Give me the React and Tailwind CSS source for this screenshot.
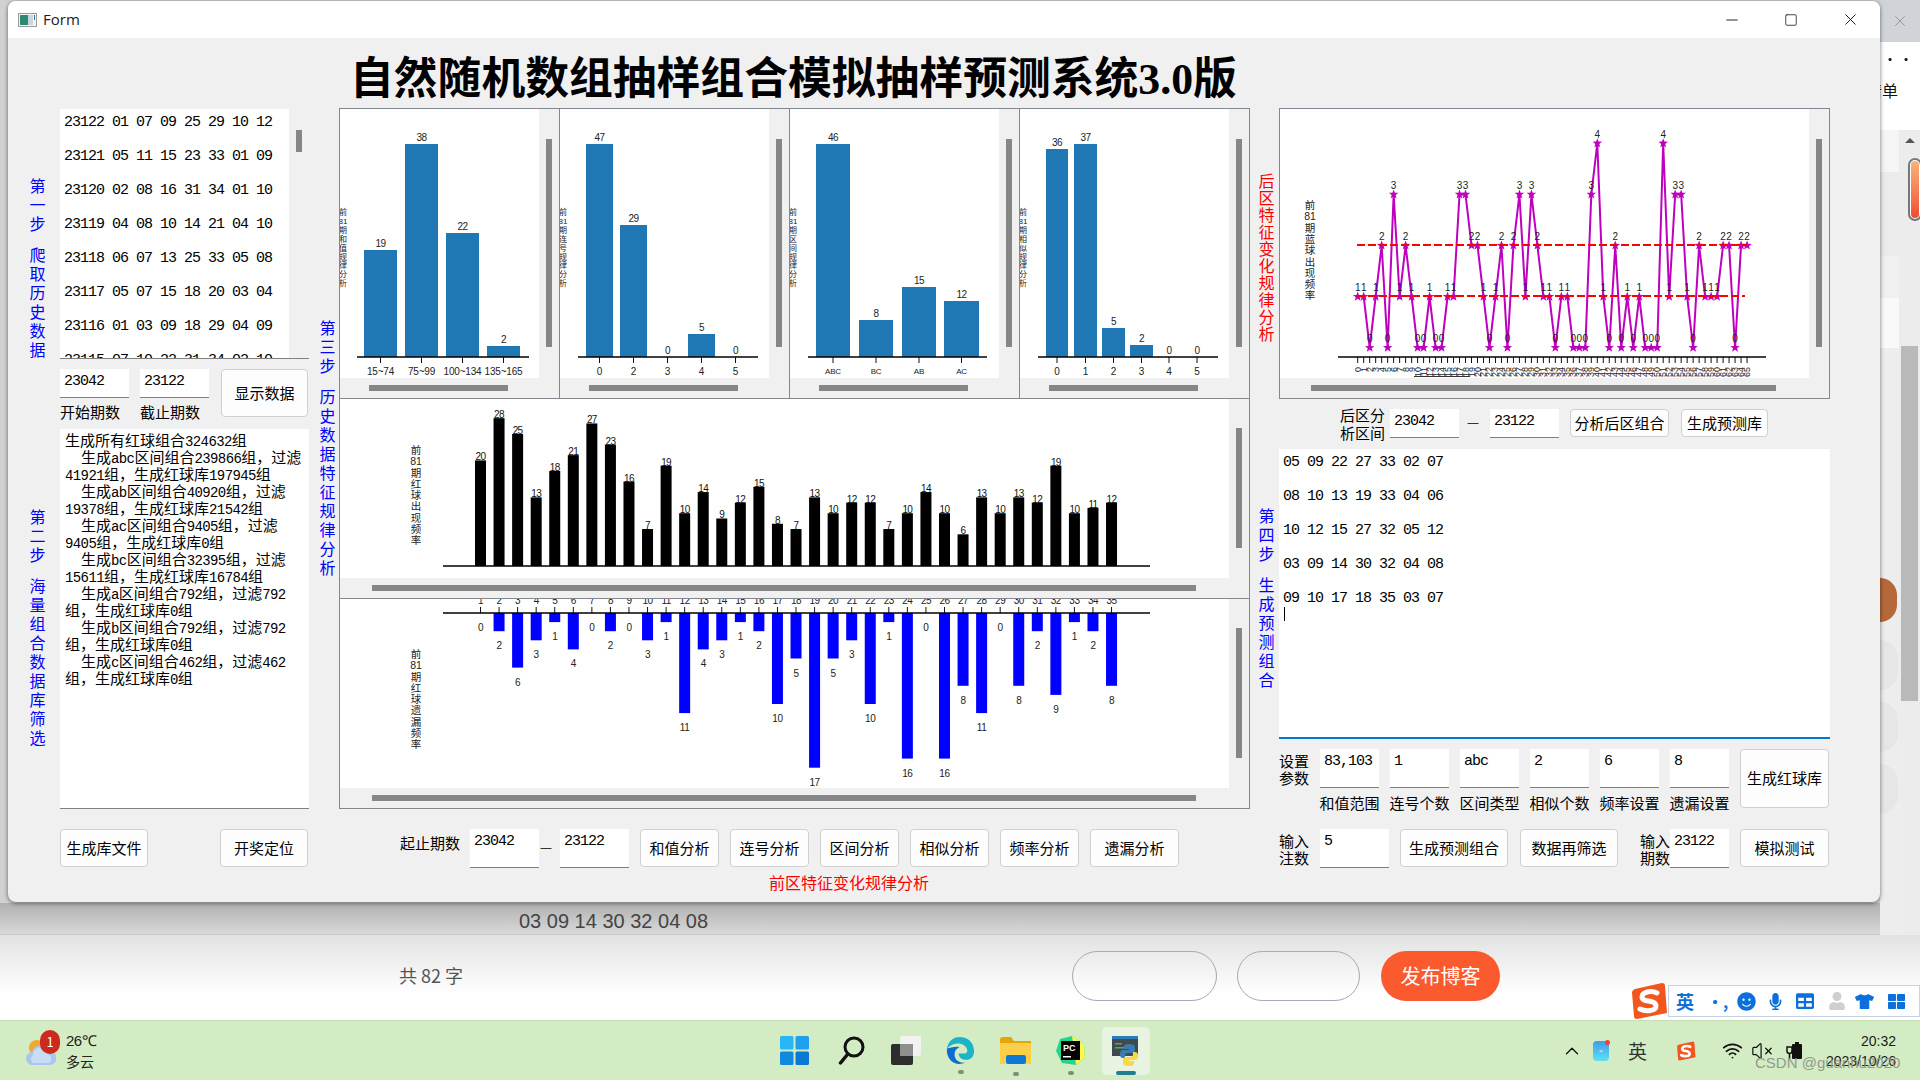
import React from 'react';
import { X, Minus, Square, ChevronUp, Wifi, VolumeX } from 'lucide-react';
import { FaSmile, FaMicrophone, FaTable, FaUser, FaTshirt, FaThLarge } from 'react-icons/fa';

const MONO = "[font-family:'Liberation_Mono','Noto_Sans_CJK_SC',monospace] text-[15px] tracking-[-1px]";
const CHART_FONT = "[font-family:'Liberation_Sans','Noto_Sans_CJK_SC',sans-serif]";

// left list of draws
const HISTORY = [
  '23122 01 07 09 25 29 10 12',
  '23121 05 11 15 23 33 01 09',
  '23120 02 08 16 31 34 01 10',
  '23119 04 08 10 14 21 04 10',
  '23118 06 07 13 25 33 05 08',
  '23117 05 07 15 18 20 03 04',
  '23116 01 03 09 18 29 04 09',
  '23115 07 10 22 31 34 02 10',
];

const LOG = [
  ['生成所有红球组合324632组', false],
  ['生成abc区间组合239866组，过滤', true],
  ['41921组，生成红球库197945组', false],
  ['生成ab区间组合40920组，过滤', true],
  ['19378组，生成红球库21542组', false],
  ['生成ac区间组合9405组，过滤', true],
  ['9405组，生成红球库0组', false],
  ['生成bc区间组合32395组，过滤', true],
  ['15611组，生成红球库16784组', false],
  ['生成a区间组合792组，过滤792', true],
  ['组，生成红球库0组', false],
  ['生成b区间组合792组，过滤792', true],
  ['组，生成红球库0组', false],
  ['生成c区间组合462组，过滤462', true],
  ['组，生成红球库0组', false],
];

const PREDICTIONS = [
  '05 09 22 27 33 02 07',
  '08 10 13 19 33 04 06',
  '10 12 15 27 32 05 12',
  '03 09 14 30 32 04 08',
  '09 10 17 18 35 03 07',
];

const RED_FREQ = [20, 28, 25, 13, 18, 21, 27, 23, 16, 7, 19, 10, 14, 9, 12, 15, 8, 7, 13, 10, 12, 12, 7, 10, 14, 10, 6, 13, 10, 13, 12, 19, 10, 11, 12];
const RED_MISS = [0, 2, 6, 3, 1, 4, 0, 2, 0, 3, 1, 11, 4, 3, 1, 2, 10, 5, 17, 5, 3, 10, 1, 16, 0, 16, 8, 11, 0, 8, 2, 9, 1, 2, 8];
const BLUE_FREQ = [1, 1, 0, 1, 2, 0, 3, 1, 2, 1, 0, 0, 1, 0, 0, 1, 1, 3, 3, 2, 2, 1, 0, 1, 2, 0, 2, 3, 1, 3, 2, 1, 1, 0, 1, 1, 0, 0, 0, 3, 4, 1, 0, 2, 0, 1, 0, 1, 0, 0, 0, 4, 1, 3, 3, 1, 0, 2, 1, 1, 1, 2, 2, 0, 2, 2];

const SMALL_CHARTS = [
  {
    view: '340 109 199 269', width: 199, labelX: 343, axis: [357, 529],
    title: ['前', '81', '期', '和', '值', '规', '律', '分', '析'],
    bars: [
      { x0: 364, x1: 397, top: 250, v: 19, name: '15~74' },
      { x0: 405, x1: 438, top: 144, v: 38, name: '75~99' },
      { x0: 446, x1: 479, top: 233, v: 22, name: '100~134' },
      { x0: 487, x1: 520, top: 346, v: 2, name: '135~165' },
    ],
  },
  {
    view: '560 109 209 269', width: 209, labelX: 563, axis: [578, 758],
    title: ['前', '81', '期', '连', '号', '规', '律', '分', '析'],
    bars: [
      { x0: 586, x1: 613, top: 144, v: 47, name: '0' },
      { x0: 620, x1: 647, top: 225, v: 29, name: '2' },
      { x0: 654, x1: 681, top: 357, v: 0, name: '3' },
      { x0: 688, x1: 715, top: 334, v: 5, name: '4' },
      { x0: 722, x1: 749, top: 357, v: 0, name: '5' },
    ],
  },
  {
    view: '790 109 209 269', width: 209, labelX: 793, axis: [808, 987],
    title: ['前', '81', '期', '区', '间', '规', '律', '分', '析'],
    bars: [
      { x0: 816, x1: 850, top: 144, v: 46, name: 'ABC' },
      { x0: 859, x1: 893, top: 320, v: 8, name: 'BC' },
      { x0: 902, x1: 936, top: 287, v: 15, name: 'AB' },
      { x0: 944, x1: 979, top: 301, v: 12, name: 'AC' },
    ],
  },
  {
    view: '1020 109 209 269', width: 209, labelX: 1023, axis: [1038, 1218],
    title: ['前', '81', '期', '相', '似', '规', '律', '分', '析'],
    bars: [
      { x0: 1046, x1: 1068, top: 149, v: 36, name: '0' },
      { x0: 1074, x1: 1097, top: 144, v: 37, name: '1' },
      { x0: 1102, x1: 1125, top: 328, v: 5, name: '2' },
      { x0: 1130, x1: 1153, top: 345, v: 2, name: '3' },
      { x0: 1158, x1: 1180, top: 357, v: 0, name: '4' },
      { x0: 1186, x1: 1208, top: 357, v: 0, name: '5' },
    ],
  },
];

// the log mixes half width latin with full width hanzi, like the SimSun original
function Mixed({ text }) {
  return text.split(/([\x00-\x7f]+)/).map((part, i) =>
    i % 2 ? (
      <span key={i} className="[font-family:'Liberation_Mono',monospace] text-[14px] leading-[10px] tracking-[-0.6px]">{part}</span>
    ) : (
      part
    )
  );
}

function VLabel({ text, className }) {
  return (
    <div className={`flex flex-col items-center text-[16px] ${className}`}>
      {text.split('').map((c, i) =>
        c === ' ' ? <div key={i} className="h-[12px]" /> : <div key={i}>{c}</div>
      )}
    </div>
  );
}

function Field({ value, className }) {
  return (
    <div className={`bg-white border-b border-[#808080] pl-[4px] pt-[3px] leading-[20px] text-black ${MONO} ${className}`}>
      {value}
    </div>
  );
}

function Btn({ children, className }) {
  return (
    <button className={`flex items-center justify-center bg-[#fdfdfd] border border-[#d0d0d0] rounded-[4px] text-[15px] text-black ${className}`}>
      {children}
    </button>
  );
}

function Caption({ children, className }) {
  return <div className={`text-[15px] text-black whitespace-nowrap ${className}`}>{children}</div>;
}

function Thumb({ className }) {
  return <div className={`bg-[#868686] ${className}`} />;
}

// one scroll area of the Qt form: picture, vertical bar, horizontal bar
function ScrollCell({ width, height, track, vThumb, hThumb, className, children }) {
  return (
    <div className={`flex flex-col shrink-0 ${className}`}>
      <div className="flex">
        <div className={`bg-white overflow-hidden ${width} ${height}`}>{children}</div>
        <div className="w-[20px]">
          <Thumb className={`ml-[7px] w-[6px] ${vThumb}`} />
        </div>
      </div>
      <div className={track}>
        <Thumb className={`mt-[7px] h-[6px] ${hThumb}`} />
      </div>
    </div>
  );
}

function StackedTitle({ x, y, tokens, size, pitch }) {
  return tokens.map((t, i) => (
    <text key={i} x={x} y={y + i * pitch} fontSize={size} textAnchor="middle" fill="#222">{t}</text>
  ));
}

function SmallBars({ chart }) {
  const [x, y, w, h] = chart.view.split(' ');
  return (
    <svg width={w} height={h} viewBox={chart.view} className={`block ${CHART_FONT}`}>
      <StackedTitle x={chart.labelX} y={215} tokens={chart.title} size={8} pitch={8.9} />
      {chart.bars.map((b) => {
        const cx = (b.x0 + b.x1) / 2;
        const short = b.name.length <= 3 && /[A-Z]/.test(b.name);
        return (
          <g key={b.name}>
            {b.v > 0 && <rect x={b.x0} y={b.top} width={b.x1 - b.x0} height={357 - b.top} fill="#1f77b4" />}
            <text x={cx} y={b.top - 3} fontSize="10" letterSpacing="-0.5" textAnchor="middle" fill="#222">{b.v}</text>
            <line x1={cx} x2={cx} y1="357" y2="363" stroke="#111" />
            <text x={cx} y={short ? 374 : 375} fontSize={short ? 8 : 10} letterSpacing="-0.2" textAnchor="middle" fill="#222">{b.name}</text>
          </g>
        );
      })}
      <line x1={chart.axis[0]} x2={chart.axis[1]} y1="357" y2="357" stroke="#000" strokeWidth="1.5" />
    </svg>
  );
}

function barX(i) {
  return 475 + i * 18.56;
}

function FreqChart() {
  return (
    <svg width="889" height="179" viewBox="340 399 889 179" className={`block ${CHART_FONT}`}>
      <StackedTitle x={416} y={454} tokens={['前', '81', '期', '红', '球', '出', '现', '频', '率']} size={10.5} pitch={11.25} />
      {RED_FREQ.map((v, i) => {
        const top = 566 - v * 5.28;
        return (
          <g key={i}>
            <rect x={barX(i)} y={top} width="11" height={566 - top} fill="#000" />
            <text x={barX(i) + 5.5} y={top} fontSize="10" letterSpacing="-0.6" textAnchor="middle" fill="#111">{v}</text>
          </g>
        );
      })}
      <line x1="443" x2="1150" y1="566" y2="566" stroke="#000" strokeWidth="1.5" />
    </svg>
  );
}

function MissChart() {
  return (
    <svg width="889" height="189" viewBox="340 599 889 189" className={`block ${CHART_FONT}`}>
      <StackedTitle x={416} y={658} tokens={['前', '81', '期', '红', '球', '遗', '漏', '频', '率']} size={10.5} pitch={11.25} />
      {RED_MISS.map((v, i) => {
        const bottom = 613 + v * 9.1;
        const cx = barX(i) + 5.5;
        return (
          <g key={i}>
            {v > 0 && <rect x={barX(i)} y="613" width="11" height={v * 9.1} fill="#0000ff" />}
            <text x={cx} y={bottom + 18} fontSize="10" letterSpacing="-0.4" textAnchor="middle" fill="#222">{v}</text>
            <line x1={cx} x2={cx} y1="607" y2="613" stroke="#111" />
            <text x={cx} y="604" fontSize="10" letterSpacing="-0.5" textAnchor="middle" fill="#222">{i + 1}</text>
          </g>
        );
      })}
      <line x1="443" x2="1150" y1="613" y2="613" stroke="#000" strokeWidth="1.5" />
    </svg>
  );
}

function starPoints(cx, cy, r) {
  const pts = [];
  for (let i = 0; i < 10; i++) {
    const rad = i % 2 ? r * 0.42 : r;
    const a = -Math.PI / 2 + (i * Math.PI) / 5;
    pts.push(`${cx + rad * Math.cos(a)},${cy + rad * Math.sin(a)}`);
  }
  return pts.join(' ');
}

function BlueChart() {
  const px = (i) => 1357.7 + i * 5.99;
  const py = (v) => 347.7 - v * 51.1;
  return (
    <svg width="529" height="269" viewBox="1280 109 529 269" className={`block ${CHART_FONT}`}>
      <StackedTitle x={1310} y={209} tokens={['前', '81', '期', '蓝', '球', '出', '现', '频', '率']} size={10.5} pitch={11.3} />
      <polyline
        points={BLUE_FREQ.map((v, i) => `${px(i)},${py(v)}`).join(' ')}
        fill="none"
        stroke="#bf00bf"
        strokeWidth="2"
      />
      {BLUE_FREQ.map((v, i) => (
        <g key={i}>
          <polygon points={starPoints(px(i), py(v), 5)} fill="#bf00bf" />
          <text x={px(i)} y={py(v) - 5.5} fontSize="10" textAnchor="middle" fill="#222">{v}</text>
          <line x1={px(i)} x2={px(i)} y1="357" y2="363" stroke="#111" />
          <text
            transform={`translate(${px(i) + 3},367) rotate(-90)`}
            fontSize="9"
            textAnchor="end"
            fill="#222"
          >
            {i}
          </text>
        </g>
      ))}
      <line x1="1357" x2="1748" y1="245" y2="245" stroke="#ff0000" strokeWidth="2" strokeDasharray="8 3" />
      <line x1="1357" x2="1745" y1="296" y2="296" stroke="#ff0000" strokeWidth="2" strokeDasharray="8 3" />
      <line x1="1338" x2="1766" y1="357" y2="357" stroke="#000" strokeWidth="1.5" />
      <line x1="1414" x2="1470" y1="376.5" y2="376.5" stroke="#333" />
    </svg>
  );
}

function TitleBar() {
  return (
    <div className="flex items-center h-[37px] bg-white shrink-0">
      <svg width="19" height="14" viewBox="0 0 19 14" className="ml-[10px]">
        <rect x="0.5" y="0.5" width="18" height="13" fill="#f4f4f4" stroke="#9a9a9a" />
        <rect x="2" y="2" width="8" height="10" fill="#2c8a74" />
        <rect x="10" y="2" width="5" height="10" fill="#c9d6de" />
        <rect x="16" y="2" width="1" height="5" fill="#49708c" />
      </svg>
      <span className="ml-[6px] text-[15px] text-[#1c1c1c] [font-family:'Open_Sans',sans-serif]">Form</span>
      <div className="ml-auto flex items-center text-[#111]">
        <Minus size={18} strokeWidth={1.2} />
        <Square size={14} strokeWidth={1.3} className="ml-[43px] rounded-[2px]" />
        <X size={19} strokeWidth={1.2} className="ml-[43px] mr-[20px]" />
      </div>
    </div>
  );
}

function LeftColumn() {
  return (
    <div className="w-[279px] shrink-0 mr-[11px] flex flex-col">
      <div className="flex mt-px">
        <VLabel text="第一步 爬取历史数据" className="w-[15px] mr-[15px] pt-[67px] leading-[19px] text-[#0000ff]" />
        <div className="flex w-[249px] h-[250px] border-b border-[#808080] overflow-hidden">
          <div className={`w-[229px] h-[249px] bg-white overflow-hidden text-black ${MONO}`}>
            <div className="-mt-[3px] pl-[4px]">
              {HISTORY.map((row) => (
                <div key={row} className="leading-[34px] whitespace-pre">{row}</div>
              ))}
            </div>
          </div>
          <div className="w-[20px]">
            <Thumb className="ml-[7px] mt-[21px] w-[6px] h-[22px]" />
          </div>
        </div>
      </div>

      <div className="flex h-[48px] ml-[30px] mt-[10px] items-start">
        <div className="w-[69px] mr-[11px] flex flex-col">
          <Field value="23042" className="h-[29px]" />
          <Caption className="mt-[5px] leading-[18px]">开始期数</Caption>
        </div>
        <div className="w-[69px] mr-[12px] flex flex-col">
          <Field value="23122" className="h-[29px]" />
          <Caption className="mt-[5px] leading-[18px]">截止期数</Caption>
        </div>
        <Btn className="w-[87px] h-[48px]">显示数据</Btn>
      </div>

      <div className="flex mt-[12px]">
        <VLabel text="第二步 海量组合数据库筛选" className="w-[15px] mr-[15px] pt-[78px] leading-[19px] text-[#0000ff]" />
        <div className="w-[249px] h-[380px] bg-white border-b border-[#808080] pl-[5px] pt-[2px] text-[15px] leading-[17px] text-black">
          {LOG.map(([line, indent], i) => (
            <div key={i} className={indent ? 'h-[17px] pl-[16px] whitespace-pre' : 'h-[17px] whitespace-pre'}>
              <Mixed text={line} />
            </div>
          ))}
        </div>
      </div>

      <div className="flex ml-[30px] mt-[20px] justify-between pr-px">
        <Btn className="w-[88px] h-[38px]">生成库文件</Btn>
        <Btn className="w-[88px] h-[38px]">开奖定位</Btn>
      </div>
    </div>
  );
}

function MiddleColumn() {
  return (
    <div className="w-[930px] shrink-0 flex flex-col">
      <div className="flex">
        <VLabel text="第三步 历史数据特征规律分析" className="w-[15px] mr-[4px] pt-[210px] leading-[19px] text-[#0000ff]" />
        <div className="w-[911px] h-[701px] border border-[#828790] flex flex-col">
          <div className="flex h-[290px] border-b border-[#828790] shrink-0">
            <ScrollCell
              width="w-[199px]" height="h-[269px]" track="pl-[29px]"
              vThumb="mt-[30px] h-[208px]" hThumb="w-[139px]" className="w-[220px] border-r border-[#828790]"
            >
              <SmallBars chart={SMALL_CHARTS[0]} />
            </ScrollCell>
            <ScrollCell
              width="w-[209px]" height="h-[269px]" track="pl-[29px]"
              vThumb="mt-[30px] h-[208px]" hThumb="w-[149px]" className="w-[230px] border-r border-[#828790]"
            >
              <SmallBars chart={SMALL_CHARTS[1]} />
            </ScrollCell>
            <ScrollCell
              width="w-[209px]" height="h-[269px]" track="pl-[29px]"
              vThumb="mt-[30px] h-[208px]" hThumb="w-[149px]" className="w-[230px] border-r border-[#828790]"
            >
              <SmallBars chart={SMALL_CHARTS[2]} />
            </ScrollCell>
            <ScrollCell
              width="w-[209px]" height="h-[269px]" track="pl-[29px]"
              vThumb="mt-[30px] h-[208px]" hThumb="w-[149px]" className="w-[229px]"
            >
              <SmallBars chart={SMALL_CHARTS[3]} />
            </ScrollCell>
          </div>
          <div className="h-[200px] border-b border-[#828790] shrink-0">
            <ScrollCell
              width="w-[889px]" height="h-[179px]" track="pl-[32px]"
              vThumb="mt-[29px] h-[120px]" hThumb="w-[824px]"
            >
              <FreqChart />
            </ScrollCell>
          </div>
          <ScrollCell
            width="w-[889px]" height="h-[189px]" track="pl-[32px]"
            vThumb="mt-[29px] h-[130px]" hThumb="w-[824px]"
          >
            <MissChart />
          </ScrollCell>
        </div>
      </div>

      <div className="flex items-start pl-[80px] mt-[20px]">
        <Caption className="w-[70px] pt-[4px] leading-[20px]">起止期数</Caption>
        <Field value="23042" className="w-[69px] h-[39px]" />
        <span className="w-[21px] pr-[7px] pt-[13px] text-center leading-[11px] text-[11px] [font-family:'Liberation_Sans',sans-serif]">—</span>
        <Field value="23122" className="w-[69px] h-[39px]" />
        <Btn className="ml-[11px] w-[79px] h-[38px]">和值分析</Btn>
        <Btn className="ml-[11px] w-[79px] h-[38px]">连号分析</Btn>
        <Btn className="ml-[11px] w-[79px] h-[38px]">区间分析</Btn>
        <Btn className="ml-[11px] w-[79px] h-[38px]">相似分析</Btn>
        <Btn className="ml-[11px] w-[79px] h-[38px]">频率分析</Btn>
        <Btn className="ml-[11px] w-[89px] h-[38px]">遗漏分析</Btn>
      </div>
      <div className="pl-[449px] mt-[4px] text-[16px] leading-[20px] text-[#ff0000]">前区特征变化规律分析</div>
    </div>
  );
}

function RightColumn() {
  return (
    <div className="w-[571px] ml-[9px] shrink-0 flex flex-col">
      <div className="flex">
        <VLabel text="后区特征变化规律分析" className="w-[15px] mr-[5px] pt-[64px] leading-[17px] text-[#ff0000]" />
        <div className="w-[551px] h-[291px] border border-[#828790]">
          <ScrollCell
            width="w-[529px]" height="h-[269px]" track="pl-[31px]"
            vThumb="mt-[30px] h-[208px]" hThumb="w-[465px]"
          >
            <BlueChart />
          </ScrollCell>
        </div>
      </div>

      <div className="flex h-[29px] items-start pl-[81px] mt-[10px]">
        <Caption className="w-[50px] -mt-[3px] leading-[18px]">后区分<br />析区间</Caption>
        <Field value="23042" className="w-[69px] h-[29px]" />
        <span className="w-[31px] pr-[3px] pt-[8px] text-center leading-[11px] text-[11px] [font-family:'Liberation_Sans',sans-serif]">—</span>
        <Field value="23122" className="w-[69px] h-[29px]" />
        <Btn className="ml-[11px] w-[99px] h-[28px]">分析后区组合</Btn>
        <Btn className="ml-[12px] w-[87px] h-[28px]">生成预测库</Btn>
      </div>

      <div className="flex mt-[11px]">
        <VLabel text="第四步 生成预测组合" className="w-[15px] mr-[5px] pt-[57px] leading-[19px] text-[#0000ff]" />
        <div className={`w-[551px] h-[290px] bg-white border-b-2 border-[#0078d4] pl-[4px] overflow-hidden text-black ${MONO}`}>
          <div className="-mt-[3px]">
            {PREDICTIONS.map((row) => (
              <div key={row} className="leading-[34px] whitespace-pre">{row}</div>
            ))}
          </div>
          <div className="-mt-[9px] ml-px w-px h-[14px] bg-black" />
        </div>
      </div>

      <div className="flex h-[59px] items-start pl-[20px] mt-[10px]">
        <Caption className="w-[41px] pt-[3px] leading-[17px]">设置<br />参数</Caption>
        {[
          ['83,103', '和值范围'],
          ['1', '连号个数'],
          ['abc', '区间类型'],
          ['2', '相似个数'],
          ['6', '频率设置'],
          ['8', '遗漏设置'],
        ].map(([value, label]) => (
          <div key={label} className="w-[59px] mr-[11px] flex flex-col items-center">
            <Field value={value} className="w-full h-[39px]" />
            <Caption className="mt-[6px] leading-[18px]">{label}</Caption>
          </div>
        ))}
        <Btn className="w-[89px] h-[59px]">生成红球库</Btn>
      </div>

      <div className="flex items-start pl-[20px] mt-[21px]">
        <Caption className="w-[41px] pt-[3px] leading-[17px]">输入<br />注数</Caption>
        <Field value="5" className="w-[69px] h-[39px]" />
        <Btn className="ml-[11px] w-[108px] h-[38px]">生成预测组合</Btn>
        <Btn className="ml-[12px] w-[98px] h-[38px]">数据再筛选</Btn>
        <Caption className="ml-[22px] w-[30px] pt-[3px] leading-[17px]">输入<br />期数</Caption>
        <Field value="23122" className="w-[59px] h-[39px]" />
        <Btn className="ml-[11px] w-[89px] h-[38px]">模拟测试</Btn>
      </div>
    </div>
  );
}

function FormWindow() {
  return (
    <div className="absolute left-[8px] top-px w-[1872px] h-[901px] flex flex-col rounded-[8px] overflow-hidden bg-[#f0f0f0] shadow-[0_1px_4px_rgba(0,0,0,0.55)]">
      <TitleBar />
      <div className="h-[70px] shrink-0 pl-[342px] pt-[4px] leading-[66px] text-[43.8px] font-bold text-black whitespace-nowrap">
        自然随机数组抽样组合模拟抽样预测系统<span className="[font-family:'Liberation_Serif',serif]">3.0</span>版
      </div>
      <div className="flex pl-[22px]">
        <LeftColumn />
        <MiddleColumn />
        <RightColumn />
      </div>
    </div>
  );
}

// what shows of the browser behind the form, on its right
function BrowserStrip() {
  return (
    <div className="w-[40px] shrink-0 flex flex-col overflow-hidden">
      <div className="h-[42px] bg-[#d0d4d8] flex items-center justify-end pr-[11px] text-[#8c8c8c]">
        <X size={18} strokeWidth={1.1} />
      </div>
      <div className="h-[88px] bg-white text-[#111]">
        <div className="pl-[4px] pt-[12px] text-[12px] leading-[12px] tracking-[4px] font-bold">···</div>
        <div className="-ml-[14px] mt-[14px] text-[16px] leading-[20px] whitespace-nowrap">清单</div>
      </div>
      <div className="flex flex-1">
        <div className="w-[19px] flex flex-col bg-[#ededed]">
          <div className="h-[42px] bg-[#f5f5f5]" />
          <div className="h-[84px] bg-[#ebebeb]" />
          <div className="h-[42px] bg-[#f0f0f0]" />
          <div className="h-[50px] bg-[#f9f9f9]" />
          <div className="mt-[230px] h-[44px] w-[17px] rounded-r-full bg-[#b5683a]" />
          <div className="mt-[18px] h-[50px] w-[18px] rounded-r-full bg-[#e6e6e6]" />
          <div className="mt-[12px] h-[50px] w-[18px] rounded-r-full bg-[#e6e6e6]" />
          <div className="mt-[12px] h-[50px] w-[18px] rounded-r-full bg-[#e6e6e6]" />
        </div>
        <div className="w-[21px] flex flex-col bg-[#ececec]">
          <div className="mt-[8px] ml-[6px] w-0 h-0 border-x-[5px] border-x-transparent border-b-[5px] border-b-[#555]" />
          <div className="mt-[15px] ml-[9px] w-[14px] h-[63px] rounded-full border-2 border-[#777] bg-white p-px">
            <div className="h-full rounded-full bg-gradient-to-b from-[#f7b27a] to-[#f0492e]" />
          </div>
          <div className="mt-[125px] ml-[2px] w-[17px] h-[355px] bg-[#b9b9b9]" />
        </div>
      </div>
    </div>
  );
}

function SogouLogo({ size = 38 }) {
  return (
    <svg width={size} height={size} viewBox="0 0 38 38">
      <path d="M5 7 L32 1 Q35 1 35 4 L37 31 L7 37 Q4 37 4 34 L2 11 Q2 8 5 7Z" fill="#f2561d" />
      <path d="M27 11 C21 8 12 10 12 15 C12 21 26 17 26 24 C26 29 16 30 10 27" fill="none" stroke="#fff" strokeWidth="5" strokeLinecap="round" />
    </svg>
  );
}

function SogouBar() {
  return (
    <div className="absolute left-[1630px] top-[47px] flex items-center h-[38px]">
      <div className="relative z-10"><SogouLogo /></div>
      <div className="flex items-center h-[32px] w-[252px] bg-white border border-[#c6d3e6] text-[#0b6fde]">
        <span className="ml-[7px] text-[18px] font-bold leading-none">英</span>
        <span className="ml-[13px] text-[16px] font-bold leading-none">•,</span>
        <FaSmile size={19} className="ml-[9px]" />
        <FaMicrophone size={17} className="ml-[11px]" />
        <FaTable size={18} className="ml-[12px]" />
        <FaUser size={18} className="ml-[14px] text-[#cfcfcf]" />
        <FaTshirt size={19} className="ml-[9px]" />
        <FaThLarge size={17} className="ml-[14px]" />
      </div>
    </div>
  );
}

function Dot() {
  return <div className="absolute -bottom-[8px] left-1/2 -ml-[3px] w-[6px] h-[4px] rounded-full bg-[#7f8f7a]" />;
}

function WeatherIcon() {
  return (
    <div className="relative w-[30px] h-[30px]">
      <svg width="30" height="30" viewBox="0 0 30 30">
        <path d="M12 1 A9 9 0 0 0 2 13 A9 9 0 0 1 12 1Z" fill="#f0a020" />
        <circle cx="11" cy="12" r="8" fill="#f2a72e" />
        <path d="M7 29 A6.5 6.5 0 0 1 6 16 A9 9 0 0 1 23 15 A7 7 0 0 1 24 29Z" fill="#a9c6ee" />
        <path d="M7 27 A5 5 0 0 1 7 19 A7 7 0 0 1 21 18 A5 5 0 0 1 23 27Z" fill="#c9dcf6" />
      </svg>
      <div className="absolute left-[14px] -top-[6px] w-[20px] h-[24px] rounded-full bg-[#cc2a1c] text-white text-[13px] leading-[24px] text-center">1</div>
    </div>
  );
}

function Taskbar() {
  return (
    <div className="relative h-[60px] shrink-0 flex items-center bg-[#d3ecc4] border-t border-[#c6dfb6] pl-[26px] text-[#222]">
      <WeatherIcon />
      <div className="ml-[10px] w-[31px] text-[14px] leading-[20px] whitespace-nowrap">
        <div className="[font-family:'Liberation_Sans',sans-serif] text-[15px] tracking-[-0.5px]">26℃</div>
        <div>多云</div>
      </div>

      <svg width="29" height="29" viewBox="0 0 29 29" className="ml-[683px]">
        <rect x="0" y="0" width="13.5" height="13.5" rx="1.5" fill="#29b6f6" />
        <rect x="15.5" y="0" width="13.5" height="13.5" rx="1.5" fill="#1fa0ec" />
        <rect x="0" y="15.5" width="13.5" height="13.5" rx="1.5" fill="#0f8ae0" />
        <rect x="15.5" y="15.5" width="13.5" height="13.5" rx="1.5" fill="#0a78d4" />
      </svg>
      <svg width="27" height="29" viewBox="0 0 27 29" className="ml-[29px]">
        <circle cx="16" cy="11" r="9" fill="none" stroke="#111" strokeWidth="3" />
        <line x1="9" y1="19" x2="2.5" y2="27" stroke="#111" strokeWidth="3.5" strokeLinecap="round" />
      </svg>
      <svg width="30" height="29" viewBox="0 0 30 29" className="ml-[26px]">
        <rect x="9" y="0" width="21" height="20" rx="2" fill="#f2f2f2" />
        <rect x="0" y="8" width="22" height="21" rx="2" fill="#2d2d2d" />
        <path d="M9 8h13v12H9z" fill="#8f8f8f" />
      </svg>
      <div className="relative ml-[24px] w-[31px] h-[31px]">
        <svg width="31" height="31" viewBox="0 0 32 32">
          <path d="M30 17C30 8 24 2 15 2 8 2 3 7 2 14c4-4 9-6 14-5 4 1 7 4 7 7 0 2-1 3-3 3h-6c0 5 6 8 11 6 3-1 5-4 5-8z" fill="#1eb4c8" />
          <path d="M2 14c-1 9 5 16 13 16 2 0 4-.5 6-1.500-7 1-12-4-11-10 .5-3 3-5 5-6-5-1-10 1-13 1.500z" fill="#0c6fd0" />
        </svg>
        <Dot />
      </div>
      <div className="relative ml-[24px] w-[31px] h-[27px]">
        <svg width="31" height="27" viewBox="0 0 31 27">
          <path d="M0 3 Q0 0 3 0 H11 L14 4 H31 V27 H0Z" fill="#e3a50a" />
          <rect x="0" y="6" width="31" height="21" rx="1" fill="#fbcf4a" />
          <rect x="6" y="18" width="20" height="9" rx="2" fill="#0d78d6" />
        </svg>
        <div className="absolute -bottom-[12px] left-1/2 -ml-[3px] w-[6px] h-[4px] rounded-full bg-[#7f8f7a]" />
      </div>
      <div className="relative ml-[25px] w-[29px] h-[29px]">
        <svg width="29" height="29" viewBox="0 0 29 29" className={CHART_FONT}>
          <polygon points="4,3 16,0 28,8 29,22 20,29 6,27 0,15" fill="#21d789" />
          <polygon points="16,0 28,8 29,22 20,29" fill="#fcf84a" />
          <rect x="5" y="5" width="19" height="19" fill="#000" />
          <text x="7" y="15" fontSize="9" fontWeight="bold" fill="#fff">PC</text>
          <rect x="7" y="20" width="8" height="1.500" fill="#fff" />
        </svg>
        <div className="absolute -bottom-[10px] left-1/2 -ml-[3px] w-[6px] h-[4px] rounded-full bg-[#7f8f7a]" />
      </div>
      <div className="relative ml-[17px] w-[48px] h-[48px] rounded-[5px] bg-[#e8f4e1] flex items-center justify-center">
        <svg width="29" height="30" viewBox="0 0 29 30">
          <rect x="0" y="0" width="26" height="20" fill="#3f4a4f" />
          <rect x="0" y="0" width="26" height="3" fill="#2b7fb8" />
          <rect x="3" y="7" width="7" height="1.500" fill="#5aa55a" />
          <rect x="3" y="11" width="10" height="1.500" fill="#5aa55a" />
          <path d="M17 8c-4 0-5 1-5 3v2h5v1h-6c-2 0-3 1-3 4s1 4 3 4h2v-2c0-2 1-3 3-3h4c2 0 3-1 3-3v-3c0-2-2-3-6-3z" fill="#3b7bb0" />
          <path d="M17 30c4 0 5-1 5-3v-2h-5v-1h6c2 0 3-1 3-4s-1-4-3-4h-2v2c0 2-1 3-3 3h-4c-2 0-3 1-3 3v3c0 2 2 3 6 3z" fill="#fbd748" />
        </svg>
        <div className="absolute bottom-0 left-[14px] w-[20px] h-[4px] rounded-full bg-[#1f7f8f]" />
      </div>

      <ChevronUp size={22} strokeWidth={1.4} className="ml-[411px] text-[#111]" />
      <div className="ml-[10px] relative w-[16px] h-[20px] rounded-[4px] bg-gradient-to-b from-[#3f9bf0] to-[#62e0f0] text-[#fff] text-[9px] leading-[20px] text-center">
        ᵕ
        <div className="absolute -right-[1px] -top-[1px] w-[5px] h-[5px] rounded-full bg-[#e8443a]" />
      </div>
      <span className="ml-[19px] w-[19px] text-[19px] leading-none text-[#333]">英</span>
      <div className="ml-[29px]"><SogouLogo size={20} /></div>
      <Wifi size={21} strokeWidth={2} className="ml-[26px] text-[#111]" />
      <VolumeX size={22} strokeWidth={1.3} className="ml-[8px] text-[#111]" />
      <svg width="17" height="20" viewBox="0 0 17 20" className="ml-[13px]">
        <rect x="6" y="3" width="10" height="15" rx="1" fill="#111" />
        <rect x="9" y="1" width="4" height="2" fill="#111" />
        <path d="M1 6h5v4a2.500 2.500 0 0 1-5 0zM3.500 12v6" fill="none" stroke="#111" strokeWidth="1.5" />
      </svg>

      <div className="ml-auto pr-[24px] text-right text-[14px] leading-[20px] text-[#1c1c1c] [font-family:'Liberation_Sans',sans-serif]">
        <div>20:32</div>
        <div>2023/10/26</div>
      </div>
      {/* blog watermark stamped over the clock */}
      <div className="absolute left-[1755px] top-[32px] text-[15px] leading-[20px] text-[#8f9a8c] whitespace-nowrap [font-family:'Liberation_Sans',sans-serif]">
        CSDN @guanhu2020
      </div>
    </div>
  );
}

export default function App() {
  return (
    <div className="relative w-[1920px] h-[1080px] overflow-hidden flex flex-col bg-white [font-family:'Noto_Sans_CJK_SC',sans-serif]">
      <div className="flex h-[935px] shrink-0">
        <div className="flex-1 flex flex-col justify-end bg-[#cfd1d3]">
          <div className="h-[32px] pl-[519px] pt-[2px] bg-gradient-to-b from-[#b0b0b0] to-[#d9d9d9] border-b border-[#cacaca] text-[20px] leading-[32px] text-[#444] [font-family:'Liberation_Sans',sans-serif]">
            03 09 14 30 32 04 08
          </div>
        </div>
        <BrowserStrip />
      </div>

      <div className="relative h-[85px] shrink-0 flex items-center pb-[4px] bg-gradient-to-b from-[#e2e2e2] via-white via-70% to-white">
        <div className="ml-[399px] w-[673px] text-[18px] text-[#555]">共 82 字</div>
        <div className="w-[145px] h-[50px] rounded-[25px] border border-[#a8a8b8]" />
        <div className="ml-[20px] w-[123px] h-[50px] rounded-[25px] border border-[#a8a8b8]" />
        <button className="ml-[21px] w-[119px] h-[50px] rounded-[25px] bg-[#fa5a2d] text-white text-[20px]">发布博客</button>
        <SogouBar />
      </div>

      <Taskbar />
      <FormWindow />
    </div>
  );
}
